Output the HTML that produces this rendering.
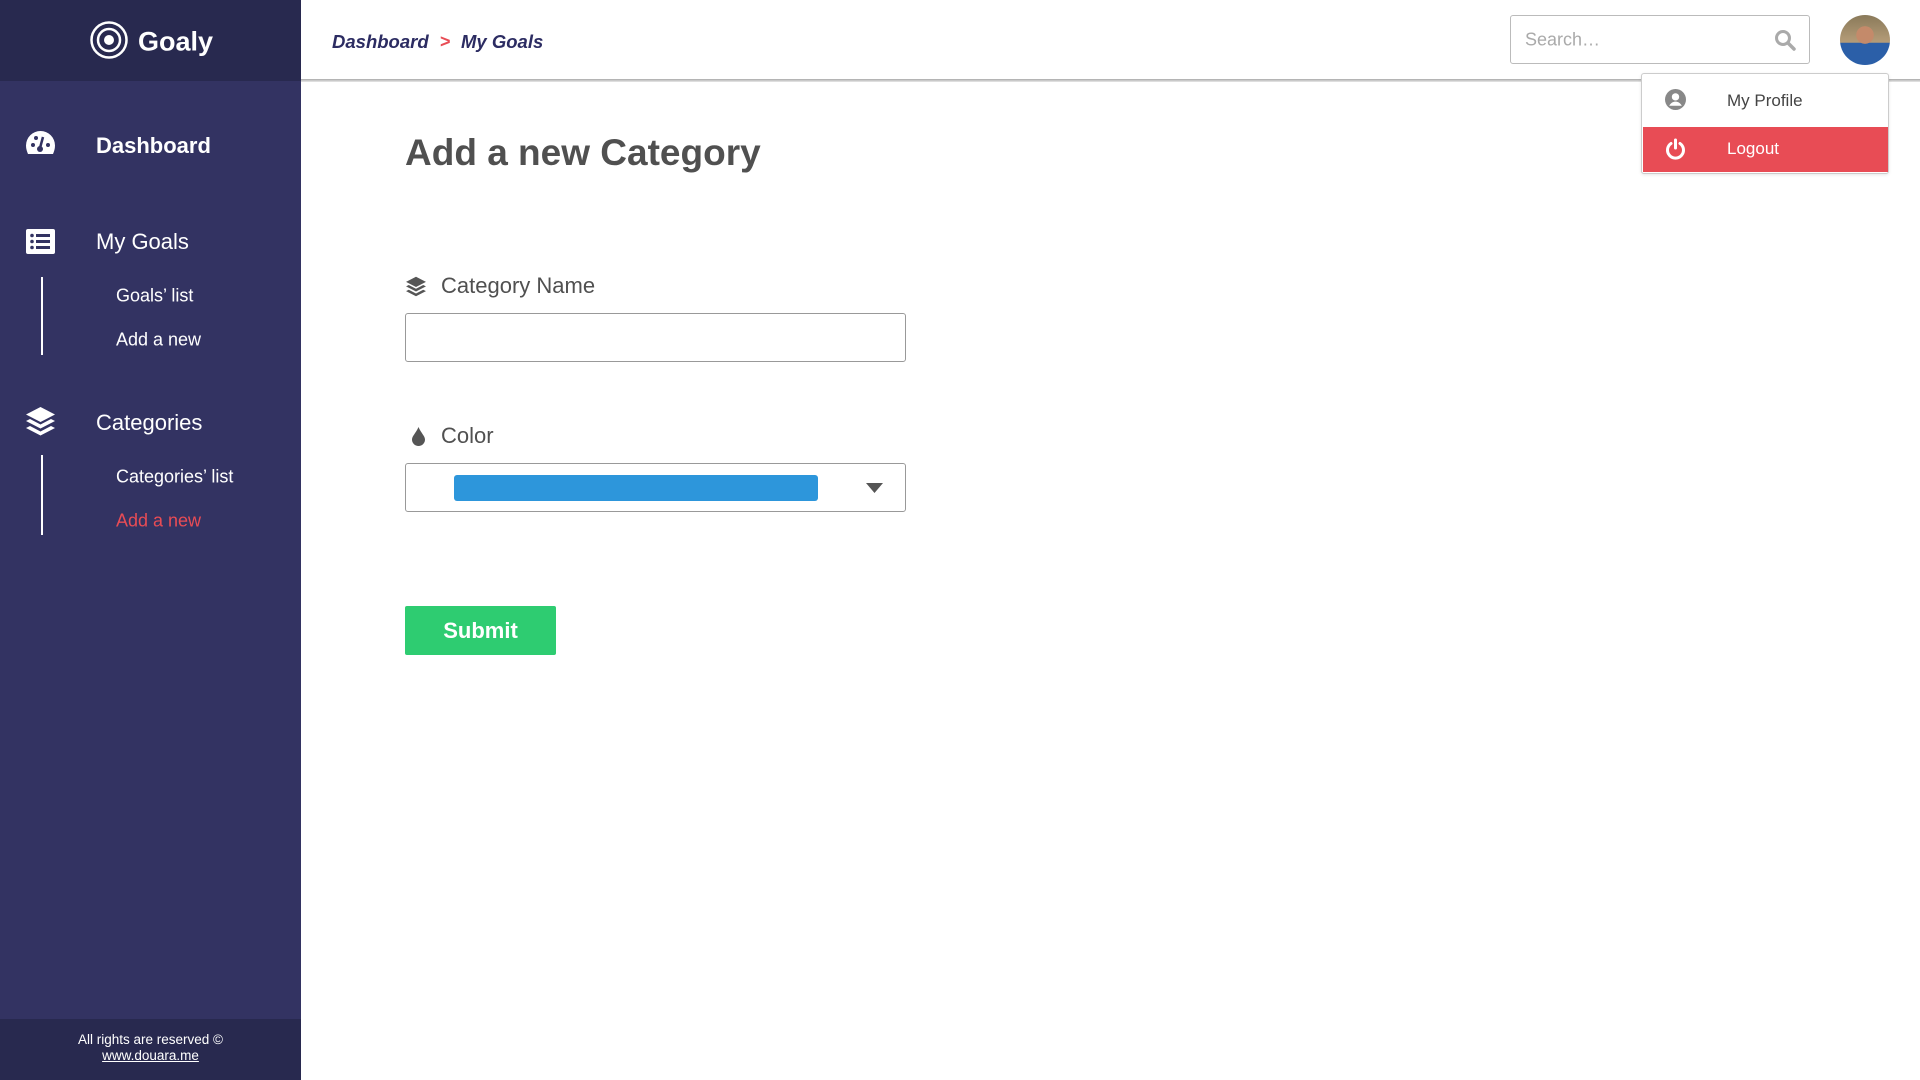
<!DOCTYPE html>
<html><head><meta charset="utf-8"><style>
*{margin:0;padding:0;box-sizing:border-box}
body{width:1920px;height:1080px;position:relative;background:#fff;font-family:"Liberation Sans",Arial,sans-serif;overflow:hidden}
.a{position:absolute;white-space:nowrap}
#sb{position:absolute;left:0;top:0;width:301px;height:1080px;background:#333362}
#sbh{position:absolute;left:0;top:0;width:301px;height:81px;background:#28294f}
#sbf{position:absolute;left:0;top:1019px;width:301px;height:61px;background:#28294f;color:#fff;font-size:13.5px;text-align:center;padding-top:13px;line-height:16px}
.w{color:#fff}
.line{position:absolute;left:41px;width:2px;background:#fff}
.sub{font-size:18px;color:#fff;transform:translateY(-50%)}
.mid{transform:translateY(-50%)}
</style></head><body>
<div id="sb"></div>
<div id="sbh"></div>
<svg class="a" style="left:89px;top:20px" width="40" height="40" viewBox="0 0 40 40"><circle cx="20" cy="20" r="17.5" fill="none" stroke="#fff" stroke-width="2.5"/><circle cx="20" cy="20" r="11" fill="none" stroke="#fff" stroke-width="2.5"/><circle cx="20" cy="20" r="5" fill="#fff"/></svg>
<div class="a w mid" style="left:138px;top:42px;font-size:27px;font-weight:bold">Goaly</div>

<svg class="a" style="left:25px;top:130px" width="31" height="26" viewBox="0 0 31 26"><path d="M15.5 1A14.5 14.5 0 0 0 1 15.5c0 3.5 1 6 2 8.5h25c1-2.5 2-5 2-8.5A14.5 14.5 0 0 0 15.5 1z" fill="#fff"/><circle cx="8" cy="15" r="2" fill="#333362"/><circle cx="11" cy="8" r="2" fill="#333362"/><circle cx="23" cy="15" r="2" fill="#333362"/><path d="M18 7l-3 11" stroke="#333362" stroke-width="2.5"/><circle cx="15" cy="19" r="3" fill="#333362"/></svg>
<div class="a w mid" style="left:96px;top:146px;font-size:22px;font-weight:bold">Dashboard</div>

<svg class="a" style="left:26px;top:229px" width="29" height="25" viewBox="0 0 29 25"><rect width="29" height="25" rx="2" fill="#fff"/><g fill="#333362"><circle cx="6" cy="6.5" r="1.8"/><circle cx="6" cy="12.5" r="1.8"/><circle cx="6" cy="18.5" r="1.8"/><rect x="10" y="5" width="14" height="3"/><rect x="10" y="11" width="14" height="3"/><rect x="10" y="17" width="14" height="3"/></g></svg>
<div class="a w mid" style="left:96px;top:242px;font-size:22px">My Goals</div>
<div class="line" style="top:277px;height:78px"></div>
<div class="a sub" style="left:116px;top:296px">Goals’ list</div>
<div class="a sub" style="left:116px;top:340px">Add a new</div>

<svg class="a" style="left:25px;top:406px" width="31" height="32" viewBox="0 0 31 32"><path d="M15.5 1L30 8.5 15.5 16 1 8.5z" fill="#fff"/><path d="M1 15l4-2 10.5 5.5L26 13l4 2-14.5 7.5z" fill="#fff"/><path d="M1 22l4-2 10.5 5.5L26 20l4 2-14.5 7.5z" fill="#fff"/></svg>
<div class="a w mid" style="left:96px;top:423px;font-size:22px">Categories</div>
<div class="line" style="top:455px;height:80px"></div>
<div class="a sub" style="left:116px;top:477px">Categories’ list</div>
<div class="a sub" style="left:116px;top:521px;color:#e84c55">Add a new</div>

<div id="sbf">All rights are reserved ©<br><span style="text-decoration:underline">www.douara.me</span></div>

<div class="a" style="left:301px;top:79px;width:1619px;height:3px;background:linear-gradient(#aaa,#e8e8e8)"></div>
<div class="a mid" style="left:332px;top:42px;font-size:18.5px;font-weight:bold;font-style:italic;color:#2c2c62">Dashboard</div>
<div class="a mid" style="left:440px;top:42px;font-size:18px;font-weight:bold;color:#e84c55">&gt;</div>
<div class="a mid" style="left:461px;top:42px;font-size:18.5px;font-weight:bold;font-style:italic;color:#2c2c62">My Goals</div>

<div class="a" style="left:1510px;top:15px;width:300px;height:49px;border:1px solid #bbb;border-radius:3px"></div>
<div class="a mid" style="left:1525px;top:40px;font-size:18px;color:#aaa">Search…</div>
<svg class="a" style="left:1774px;top:29px" width="22" height="22" viewBox="0 0 22 22"><circle cx="9" cy="9" r="6.5" fill="none" stroke="#aaa" stroke-width="3"/><path d="M14 14l6 6" stroke="#aaa" stroke-width="3.5" stroke-linecap="round"/></svg>
<div class="a" style="left:1840px;top:15px;width:50px;height:50px;border-radius:50%;background:radial-gradient(circle at 50% 40%,#c48a6a 0 22%,transparent 23%),linear-gradient(#8a7a5a 0,#b59c78 55%,#2b5fa8 56%)"></div>

<div class="a" style="left:1641px;top:73px;width:248px;height:101px;border:1px solid #ccc;border-radius:3px;background:#fff;box-shadow:0 1px 3px rgba(0,0,0,.1)"></div>
<svg class="a" style="left:1665px;top:89px" width="21" height="21" viewBox="0 0 20 20"><circle cx="10" cy="10" r="10" fill="#888"/><circle cx="10" cy="7.5" r="3.5" fill="#fff"/><path d="M4 16c1.5-3 4-4 6-4s4.5 1 6 4" fill="#fff"/></svg>
<div class="a mid" style="left:1727px;top:101px;font-size:17px;color:#444">My Profile</div>
<div class="a" style="left:1643px;top:127px;width:245px;height:45px;background:#e84c55"></div>
<svg class="a" style="left:1665px;top:138px" width="21" height="22" viewBox="0 0 21 22"><path d="M6 5.5A8 8 0 1 0 15 5.5" fill="none" stroke="#fff" stroke-width="3" stroke-linecap="round"/><path d="M10.5 2v8" stroke="#fff" stroke-width="3" stroke-linecap="round"/></svg>
<div class="a mid" style="left:1727px;top:149px;font-size:17px;color:#fff">Logout</div>

<div class="a mid" style="left:405px;top:153px;font-size:37px;font-weight:bold;color:#505050">Add a new Category</div>

<svg class="a" style="left:405px;top:276px" width="22" height="22" viewBox="0 0 31 32"><path d="M15.5 1L30 8.5 15.5 16 1 8.5z" fill="#555"/><path d="M1 15l4-2 10.5 5.5L26 13l4 2-14.5 7.5z" fill="#555"/><path d="M1 22l4-2 10.5 5.5L26 20l4 2-14.5 7.5z" fill="#555"/></svg>
<div class="a mid" style="left:441px;top:286px;font-size:22px;color:#505050">Category Name</div>
<div class="a" style="left:405px;top:313px;width:501px;height:49px;border:1px solid #999;border-radius:3px"></div>

<svg class="a" style="left:411px;top:426px" width="15" height="20" viewBox="0 0 15 20"><path d="M7.5 1C5 7 1 10 1 13.5a6.5 6.5 0 0 0 13 0C14 10 10 7 7.5 1z" fill="#555"/></svg>
<div class="a mid" style="left:441px;top:436px;font-size:22px;color:#505050">Color</div>
<div class="a" style="left:405px;top:463px;width:501px;height:49px;border:1px solid #999;border-radius:3px"></div>
<div class="a" style="left:454px;top:475px;width:364px;height:26px;background:#2d96db;border-radius:3px"></div>
<svg class="a" style="left:866px;top:483px" width="17" height="10" viewBox="0 0 17 10"><path d="M0 0h17L8.5 10z" fill="#555"/></svg>

<div class="a" style="left:405px;top:606px;width:151px;height:49px;background:#2ecc71;border-radius:2px;color:#fff;font-size:22px;font-weight:bold;text-align:center;line-height:49px">Submit</div>
</body></html>
